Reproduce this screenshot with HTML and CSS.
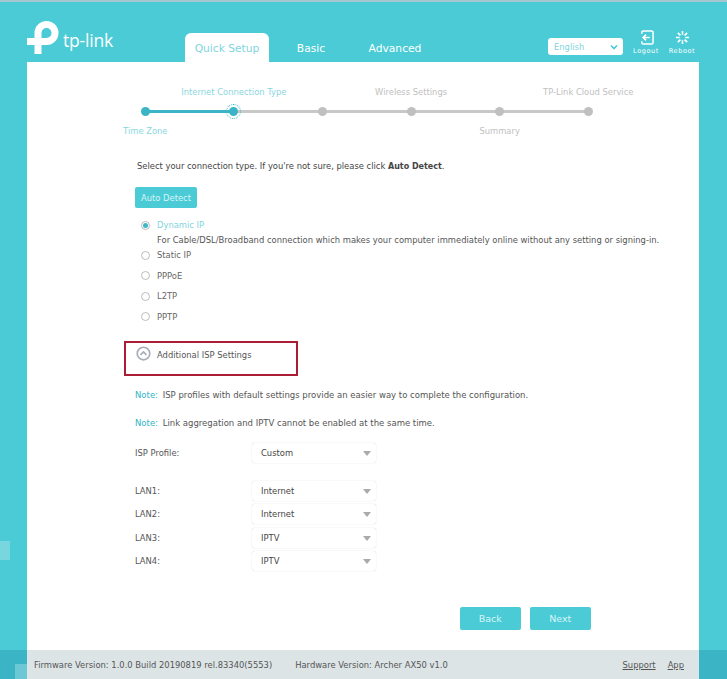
FILE: index.html
```html
<!DOCTYPE html>
<html lang="en">
<head>
    <meta charset="UTF-8">
    <meta name="viewport" content="width=device-width, initial-scale=1.0">
    <title>Quick Setup</title>
    <link rel="stylesheet" href="styles.css">
</head>
<body>
    <span class="patch patch-left"></span>
    <span class="patch patch-foot"></span>

    <header class="topbar">
        <div class="logo">
            <svg class="logo-mark" width="34" height="36" viewBox="0 0 34 36" aria-hidden="true">
                <path d="M0 22.5H19.5A8.5 8.5 0 1 0 11 14V35" fill="none" stroke="#fff" stroke-width="7"/>
            </svg>
            <span class="logo-text">tp-link</span>
        </div>
        <nav class="tabs">
            <a class="tab active">Quick Setup</a>
            <a class="tab">Basic</a>
            <a class="tab">Advanced</a>
        </nav>
        <div class="lang">
            <span>English</span>
            <svg width="8" height="6" viewBox="0 0 8 6" aria-hidden="true">
                <path d="M1 1.5L4 4.5L7 1.5" fill="none" stroke="#4acbd6" stroke-width="1.6"/>
            </svg>
        </div>
        <a class="tool">
            <svg width="15" height="15" viewBox="0 0 16 16" aria-hidden="true">
                <path d="M3 4V2.5A1.5 1.5 0 0 1 4.5 1H13.5A1.5 1.5 0 0 1 15 2.5V13.5A1.5 1.5 0 0 1 13.5 15H4.5A1.5 1.5 0 0 1 3 13.5V12" fill="none" stroke="#fff" stroke-width="1.6"/>
                <path d="M11.5 8H5M7.5 5L4.5 8L7.5 11" fill="none" stroke="#fff" stroke-width="1.8"/>
            </svg>
            <span>Logout</span>
        </a>
        <a class="tool">
            <svg width="15" height="15" viewBox="0 0 16 16" aria-hidden="true">
                <path d="M8 1V5M8 11V15M1 8H5M11 8H15M3 3L5.8 5.8M10.2 10.2L13 13M13 3L10.2 5.8M5.8 10.2L3 13" fill="none" stroke="#fff" stroke-width="1.7"/>
            </svg>
            <span>Reboot</span>
        </a>
    </header>

    <main class="panel">
        <div class="stepper">
            <div class="step done"><span></span><i class="dot"></i><span>Time Zone</span></div>
            <div class="step current"><span>Internet Connection Type</span><i class="dot"></i><span></span></div>
            <div class="step"><span></span><i class="dot"></i><span></span></div>
            <div class="step"><span>Wireless Settings</span><i class="dot"></i><span></span></div>
            <div class="step"><span></span><i class="dot"></i><span>Summary</span></div>
            <div class="step"><span>TP-Link Cloud Service</span><i class="dot"></i><span></span></div>
        </div>

        <p class="intro">Select your connection type. If you're not sure, please click <b>Auto Detect</b>.</p>
        <button class="btn btn-detect">Auto Detect</button>

        <div class="radios">
            <div class="radio selected"><i class="circle"></i>Dynamic IP</div>
            <p class="radio-desc">For Cable/DSL/Broadband connection which makes your computer immediately online without any setting or signing-in.</p>
            <div class="radio"><i class="circle"></i>Static IP</div>
            <div class="radio"><i class="circle"></i>PPPoE</div>
            <div class="radio"><i class="circle"></i>L2TP</div>
            <div class="radio"><i class="circle"></i>PPTP</div>
        </div>

        <div class="isp-toggle">
            <svg width="15" height="15" viewBox="0 0 16 16" aria-hidden="true">
                <circle cx="8" cy="8" r="6.7" fill="#fff" stroke="#a9adb8" stroke-width="1.8"/>
                <path d="M4.8 9.5L8 6.3L11.2 9.5" fill="none" stroke="#a9adb8" stroke-width="1.8"/>
            </svg>
            <span>Additional ISP Settings</span>
        </div>

        <p class="note"><b>Note:</b> ISP profiles with default settings provide an easier way to complete the configuration.</p>
        <p class="note"><b>Note:</b> Link aggregation and IPTV cannot be enabled at the same time.</p>

        <div class="field field-profile">
            <label>ISP Profile:</label>
            <div class="select">Custom</div>
        </div>
        <div class="lan-list">
            <div class="field"><label>LAN1:</label><div class="select">Internet</div></div>
            <div class="field"><label>LAN2:</label><div class="select">Internet</div></div>
            <div class="field"><label>LAN3:</label><div class="select">IPTV</div></div>
            <div class="field"><label>LAN4:</label><div class="select">IPTV</div></div>
        </div>

        <div class="actions">
            <button class="btn">Back</button>
            <button class="btn">Next</button>
        </div>
    </main>

    <footer class="foot">
        <div class="foot-inner">
            <span>Firmware Version: 1.0.0 Build 20190819 rel.83340(5553)</span>
            <span class="hardware">Hardware Version: Archer AX50 v1.0</span>
            <a class="foot-link support">Support</a>
            <a class="foot-link">App</a>
        </div>
    </footer>
</body>
</html>
```

FILE: styles.css
```css
:root {
    --teal: #4acbd6;
    --teal-dark: #3bb5c5;
    --grey-line: #c8c8c8;
    --text: #555;
}

* {
    margin: 0;
    padding: 0;
    box-sizing: border-box;
}

html, body {
    height: 679px;
    overflow: hidden;
}

body {
    position: relative;
    display: flex;
    flex-direction: column;
    font-family: "DejaVu Sans", sans-serif;
    font-size: 8.4px;
    color: var(--text);
    background: var(--teal);
    border-top: 2px solid #a4c8cf;
}

/* pale leftovers on the side strip */
.patch {
    position: absolute;
    left: 0;
    background: #78d6df;
}

.patch-left {
    top: 539px;
    width: 10px;
    height: 19px;
}

.patch-foot {
    top: 662px;
    left: 15px;
    width: 12px;
    height: 15px;
    background: #6cc8d4;
}

.topbar {
    display: flex;
    align-items: flex-end;
    height: 60px;
    padding-left: 27px;
    flex-shrink: 0;
}

.logo {
    display: flex;
    align-items: flex-start;
    align-self: flex-start;
    width: 158px;
    height: 42px;
    margin-top: 17px;
}

.logo-text {
    margin: 9px 0 0 2px;
    font-family: "Open Sans", sans-serif;
    font-size: 17.5px;
    line-height: 24px;
    color: #fff;
    letter-spacing: -0.2px;
}

.tabs {
    display: flex;
    width: 363px;
}

.tab {
    width: 84px;
    height: 29px;
    font-size: 10.7px;
    line-height: 31px;
    text-align: center;
    color: #fff;
    border-radius: 6px 6px 0 0;
}

.tab.active {
    background: #fff;
    color: #7fd5de;
}

.lang {
    display: flex;
    align-items: center;
    justify-content: space-between;
    align-self: flex-start;
    width: 75px;
    height: 17px;
    margin-top: 36px;
    padding: 0 5px 0 6px;
    background: #fff;
    border-radius: 3px;
    color: #7fd5de;
}

.tool {
    display: flex;
    flex-direction: column;
    align-items: center;
    align-self: flex-start;
    width: 36px;
    margin-top: 28px;
    font-size: 6.5px;
    letter-spacing: 0.6px;
    color: #fff;
}

.lang + .tool {
    margin-left: 5px;
}

.tool svg {
    margin-bottom: 2px;
}

.panel {
    flex: 1;
    margin: 0 28px 0 27px;
    padding-top: 19px;
    background: #fff;
}

.stepper {
    display: flex;
    margin-left: 74px;
}

.step {
    position: relative;
    display: flex;
    flex-direction: column;
    align-items: center;
    width: 88.6px;
    height: 60px;
    color: #c0c0c0;
    white-space: nowrap;
}

.step span {
    height: 20px;
    line-height: 20px;
}

.step span:first-child {
    line-height: 22px;
}

/* connector to the next step */
.step::after {
    content: "";
    position: absolute;
    top: 28.5px;
    left: 50%;
    width: 100%;
    height: 3px;
    background: var(--grey-line);
}

.step:last-child::after {
    display: none;
}

.dot {
    position: relative;
    z-index: 1;
    width: 9px;
    height: 9px;
    margin: 5.5px 0;
    background: #c0c0c0;
    border-radius: 50%;
}

.step.done,
.step.current {
    color: #8ad6de;
}

.step.done::after {
    background: var(--teal-dark);
}

.step.done .dot,
.step.current .dot {
    background: var(--teal-dark);
}

.step.current .dot::after {
    content: "";
    position: absolute;
    inset: -3px;
    border: 1.5px dotted var(--teal-dark);
    border-radius: 50%;
}

.intro {
    height: 20px;
    margin: 15px 0 0 110px;
    line-height: 20px;
    color: #444;
}

.intro b {
    font-size: 8px;
}

.btn {
    display: block;
    width: 60.5px;
    height: 23px;
    font-family: inherit;
    font-size: 9.5px;
    color: #d8f5f8;
    background: var(--teal);
    border: none;
    border-radius: 2px;
}

.btn-detect {
    width: 62px;
    height: 21px;
    margin: 11px 0 0 108px;
    font-size: 8.4px;
}

.radios {
    margin: 9.5px 0 0 114px;
}

.radio {
    display: flex;
    align-items: center;
    height: 15px;
    margin-bottom: 5.5px;
    color: #666;
}

.radio.selected {
    margin-bottom: 0;
    color: #7fd5de;
}

.circle {
    position: relative;
    width: 9px;
    height: 9px;
    margin-right: 7px;
    border: 1px solid #bbb;
    border-radius: 50%;
}

.radio.selected .circle::after {
    content: "";
    position: absolute;
    inset: 1px;
    background: #3fb9c8;
    border-radius: 50%;
}

.radio-desc {
    height: 15px;
    margin-left: 16px;
    line-height: 15px;
    white-space: nowrap;
}

.isp-toggle {
    display: flex;
    align-items: flex-start;
    width: 174px;
    height: 35px;
    margin: 17px 0 0 97px;
    padding: 3px 0 0 10px;
    border: 2px solid #ab1d35;
}

.isp-toggle span {
    margin-left: 6px;
    line-height: 18px;
}

.note {
    height: 20px;
    margin: 9px 0 0 108px;
    font-size: 8.5px;
    line-height: 20px;
    white-space: nowrap;
}

.note + .note {
    margin-top: 8px;
}

.note b {
    margin-right: 2px;
    font-weight: 400;
    color: #33b4c4;
}

.field {
    display: flex;
    align-items: center;
    margin-left: 108px;
}

.field label {
    width: 117px;
}

.field-profile {
    margin-top: 10px;
}

.select {
    position: relative;
    width: 124px;
    height: 20px;
    padding-left: 9px;
    line-height: 20px;
    color: #444;
    background: #fff;
    border-radius: 3px;
    box-shadow: 0 0 1px rgba(0, 0, 0, 0.25);
}

/* dropdown arrow */
.select::after {
    content: "";
    position: absolute;
    top: 8px;
    right: 5px;
    border-left: 4px solid transparent;
    border-right: 4px solid transparent;
    border-top: 5px solid #aaa;
}

.lan-list {
    display: flex;
    flex-direction: column;
    gap: 3.5px;
    margin-top: 17.5px;
}

.actions {
    display: flex;
    gap: 9.5px;
    margin: 35.5px 0 0 433px;
}

.foot {
    height: 29px;
    background: var(--teal-dark);
    flex-shrink: 0;
}

.foot-inner {
    display: flex;
    align-items: center;
    height: 100%;
    margin: 0 28px 0 27px;
    padding-left: 7px;
    background: #dce4e6;
    color: #555;
    white-space: nowrap;
}

.hardware {
    margin-left: 23px;
}

.foot-link {
    margin-left: 12px;
    text-decoration: underline;
}

.support {
    margin-left: auto;
}

.foot-link:last-child {
    margin-right: 15px;
}
```
